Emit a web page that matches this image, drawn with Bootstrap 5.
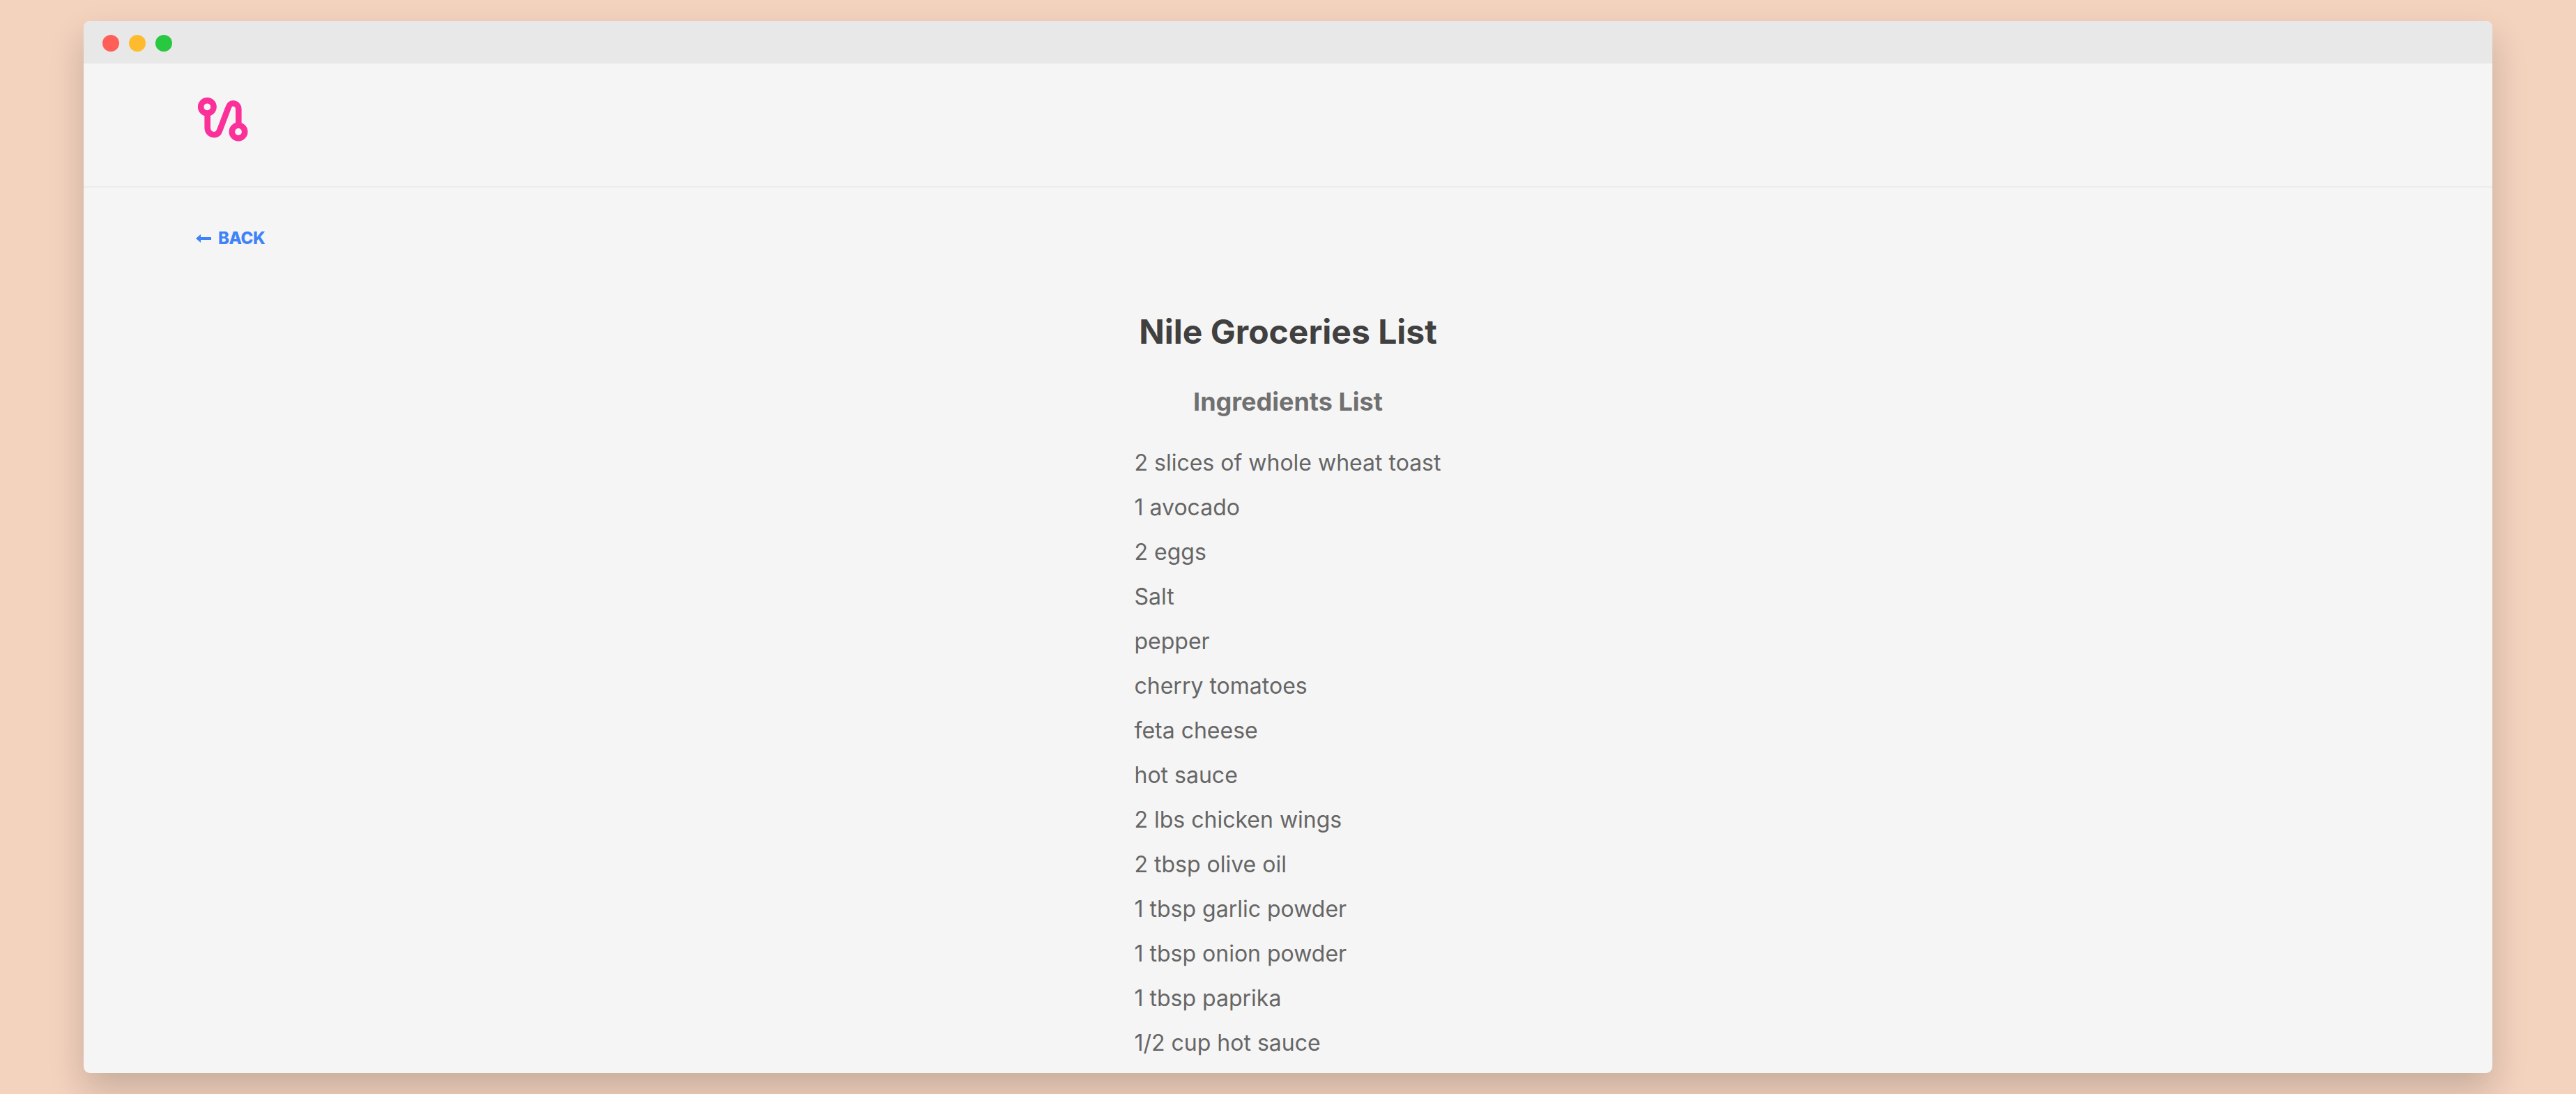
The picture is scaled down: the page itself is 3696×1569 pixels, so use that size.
<!doctype html>
<html><head><meta charset="utf-8">
<link href="https://cdn.jsdelivr.net/npm/bootstrap@5.3.0/dist/css/bootstrap.min.css" rel="stylesheet">
<style>
html,body{height:100%}
body{background:#f3d2be;font-family:Inter,sans-serif;overflow:hidden}
.stage{height:1569px;padding:30px 120px}
.win{height:100%;background:#f5f5f5;border-radius:9px;overflow:hidden;box-shadow:0 24px 50px rgba(0,0,0,.18)}
.tbar{height:61px;background:#e8e8e8;padding:3px 0 0 27px;gap:14px}
.dot{width:24px;height:24px;border-radius:50%}
.dot-r{background:#ff5f57}.dot-y{background:#ffbb2e}.dot-g{background:#28c840}
.hdr{height:178px;border-bottom:2px solid #ececec;padding:48px 0 0 164px}
.logo{display:block}
.back{padding:58px 0 0 161px;line-height:30px}
.back a{color:#3f83f8;text-decoration:none;font-size:24px;font-weight:800;letter-spacing:-.4px;gap:10px}
.col-mid{width:441px;margin:0 auto}
h1.ttl{font-size:48px;font-weight:700;color:#404040;text-align:center;margin:88px 0 0;line-height:60px;white-space:nowrap}
h2.sub{font-size:36px;font-weight:700;color:#707070;text-align:center;margin:48px 0 0;line-height:44px;white-space:nowrap}
.ing{list-style:none;margin:34px 0 0;padding:0;font-size:32px;color:#666;line-height:64px;white-space:nowrap}
</style></head><body>
<div class="stage"><div class="win">
<div class="tbar d-flex align-items-center"><span class="dot dot-r"></span><span class="dot dot-y"></span><span class="dot dot-g"></span></div>
<div class="hdr"><svg class="logo" width="72" height="64" viewBox="0 0 72 64" fill="none" stroke="#fb3099" stroke-width="8.6" stroke-linecap="round" aria-label="logo"><circle cx="13.3" cy="14.3" r="9.2"/><circle cx="58" cy="50" r="9.2"/><path d="M13.7 24V44.3C13.7 50 18 54.3 23.7 54.3C27.5 54.3 29.7 52 31 48.5L42.7 17.7C44 13.5 46.5 9.3 50 9.3C55 9.3 58.3 13 58.3 17.7V39"/></svg></div>
<div class="back"><a href="#" class="d-inline-flex align-items-center"><svg width="22" height="14" viewBox="0 0 22 14" aria-hidden="true"><path d="M0 7L7 1V5H22V9H7V13Z" fill="#3f83f8"/></svg>BACK</a></div>
<div class="col-mid">
<h1 class="ttl">Nile Groceries List</h1>
<h2 class="sub">Ingredients List</h2>
<ul class="ing"><li>2 slices of whole wheat toast</li><li>1 avocado</li><li>2 eggs</li><li>Salt</li><li>pepper</li><li>cherry tomatoes</li><li>feta cheese</li><li>hot sauce</li><li>2 lbs chicken wings</li><li>2 tbsp olive oil</li><li>1 tbsp garlic powder</li><li>1 tbsp onion powder</li><li>1 tbsp paprika</li><li>1/2 cup hot sauce</li></ul>
</div>
</div></div>
<script src="https://cdn.jsdelivr.net/npm/bootstrap@5.3.0/dist/js/bootstrap.bundle.min.js"></script>
</body></html>
